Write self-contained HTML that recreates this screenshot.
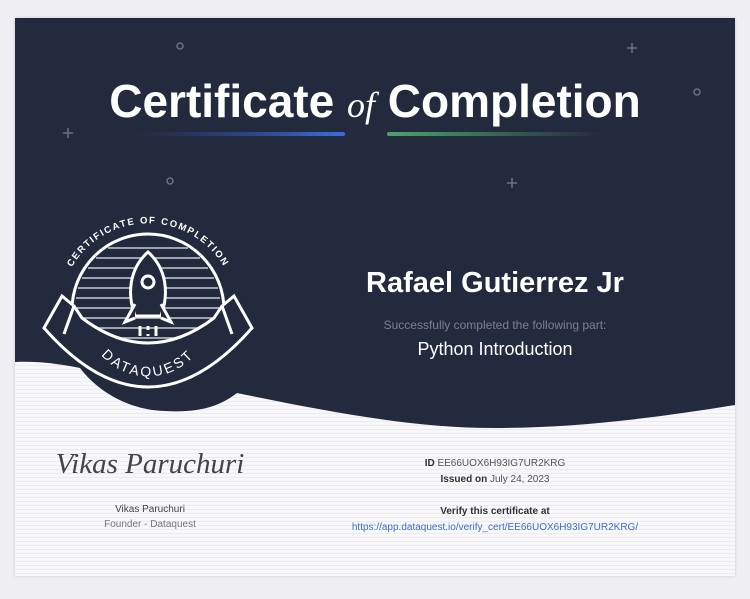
<!DOCTYPE html>
<html><head><style>
body{margin:0;width:750px;height:599px;background:#efeff4;font-family:"Liberation Sans",sans-serif;overflow:hidden;position:relative}
.card{position:absolute;left:15px;top:18px;width:720px;height:558px;background:#f7f7f9;box-shadow:0 0 3px rgba(0,0,0,.15);overflow:hidden}
.t{position:absolute;text-align:center;white-space:nowrap}
</style></head><body>
<div class="card">
<svg width="720" height="558" style="position:absolute;left:0;top:0">
<defs>
<linearGradient id="gb" x1="0" x2="1"><stop offset="0" stop-color="#2a4a9a" stop-opacity="0"/><stop offset="1" stop-color="#3a6fe0"/></linearGradient>
<linearGradient id="gg" x1="0" x2="1"><stop offset="0" stop-color="#4aa56a"/><stop offset="1" stop-color="#4aa56a" stop-opacity="0"/></linearGradient>
<pattern id="ln" width="6" height="4" patternUnits="userSpaceOnUse"><rect width="6" height="4" fill="#f8f8fa"/><rect y="3" width="6" height="1" fill="#ececf0"/></pattern>
<path id="arcT" d="M47 312 A88 88 0 1 1 219 312"/>
<path id="arcB" d="M73 312 A62 62 0 0 0 193 312"/>
</defs>
<rect width="720" height="558" fill="url(#ln)"/>
<path d="M0 0H720V387C640 400 560 410 480 410C400 410 320 395 222 375C205 388 185 395 150 393C110 392 80 370 65 350C40 345 20 343 0 344Z" fill="#232a3d"/>
<rect x="115" y="114" width="215" height="4" rx="2" fill="url(#gb)"/>
<rect x="372" y="114" width="215" height="4" rx="2" fill="url(#gg)"/>
<g fill="none" stroke="#6a7085" stroke-width="1.5">
<circle cx="165" cy="28" r="3"/><circle cx="682" cy="74" r="3"/><circle cx="155" cy="163" r="3"/>
<path d="M617 25v10M612 30h10M53 110v10M48 115h10M497 160v10M492 165h10"/>
</g>
<g transform="translate(133,292)" fill="none" stroke="#fff" stroke-width="3">
<circle r="76"/>
<g stroke-width="1.5" stroke="#c8cad2">
<path d="M-40 -62H40M-52 -52H52M-60 -42H60M-66 -32H66M-70 -22H70M-72 -12H72M-73 -2H73M-72 8H72M-70 18H70M-66 28H66"/>
</g>
<path d="M0 -58C-19 -41 -21 -16 -13 6H13C21 -16 19 -41 0 -58Z" fill="#232a3d"/>
<circle cy="-28" r="6" fill="#232a3d"/>
<path d="M-13 -6L-23 12L-13 8M13 -6L23 12L13 8" fill="#232a3d"/>
<path d="M-8 16v10M0 16v4M0 24v2M8 16v10"/>
<path d="M-66 8L-74 -4L-86 -14L-104 18Q0 136 104 18L86 -14L74 -4L66 8Q0 58 -66 8Z" fill="#232a3d"/>
<path d="M-74 -4L-84 24M74 -4L84 24"/>
</g>
<text fill="#fff" font-size="9.5" letter-spacing="1.6" font-weight="bold"><textPath href="#arcT" startOffset="50%" text-anchor="middle">CERTIFICATE OF COMPLETION</textPath></text>
<text fill="#fff" font-size="14" letter-spacing="2.5"><textPath href="#arcB" startOffset="50%" text-anchor="middle">DATAQUEST</textPath></text>
</svg>
<div class="t" style="left:0;width:720px;top:56px;font-size:46px;font-weight:bold;color:#fff">Certificate <span style="font-family:'Liberation Serif',serif;font-style:italic;font-weight:normal;font-size:36px">of</span> Completion</div>
<div class="t" style="left:250px;width:460px;top:249px;font-size:29px;font-weight:bold;color:#fff">Rafael Gutierrez Jr</div>
<div class="t" style="left:250px;width:460px;top:300px;font-size:12px;color:#7a8094">Successfully completed the following part:</div>
<div class="t" style="left:250px;width:460px;top:321px;font-size:18px;color:#fff">Python Introduction</div>
<div class="t" style="left:40px;width:190px;top:430px;font-size:29px;font-family:'Liberation Serif',serif;font-style:italic;color:#444">Vikas Paruchuri</div>
<div class="t" style="left:45px;width:180px;top:486px;font-size:10px;color:#444">Vikas Paruchuri</div>
<div class="t" style="left:45px;width:180px;top:501px;font-size:10px;color:#777">Founder - Dataquest</div>
<div class="t" style="left:250px;width:460px;top:440px;font-size:10px;color:#555"><b style="color:#333">ID</b> EE66UOX6H93IG7UR2KRG</div>
<div class="t" style="left:250px;width:460px;top:456px;font-size:10px;color:#555"><b style="color:#333">Issued on</b> July 24, 2023</div>
<div class="t" style="left:250px;width:460px;top:488px;font-size:10px;font-weight:bold;color:#333">Verify this certificate at</div>
<div class="t" style="left:250px;width:460px;top:504px;font-size:10px;color:#3a6fd0">https://app.dataquest.io/verify_cert/EE66UOX6H93IG7UR2KRG/</div>
</div>
</body></html>
